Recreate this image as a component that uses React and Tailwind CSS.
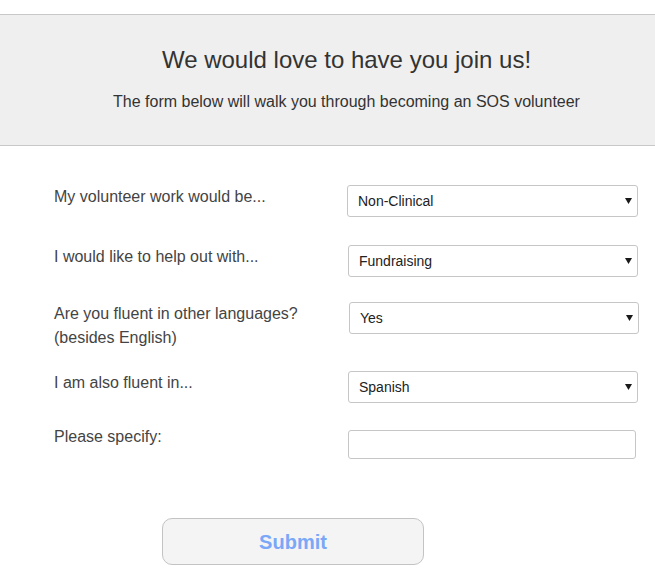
import { useState } from 'react'

function Arrow() {
  return (
    <svg
      className="pointer-events-none absolute right-[6px] top-1/2 -translate-y-1/2"
      width="7"
      height="6"
      viewBox="0 0 7 6"
    >
      <path d="M0 0 H7 L3.5 6 Z" fill="#1a1a1a" />
    </svg>
  )
}

function Select({ value, options, onChange, className }) {
  return (
    <div className={`relative w-[290px] ${className || ''}`}>
      <select
        value={value}
        onChange={(e) => onChange(e.target.value)}
        className="block h-[32px] w-full appearance-none rounded-[3px] border border-[#c6c6c6] bg-white pl-[10px] pr-6 text-[14px] text-[#222] outline-none"
      >
        {options.map((o) => (
          <option key={o}>{o}</option>
        ))}
      </select>
      <Arrow />
    </div>
  )
}

export default function App() {
  const [work, setWork] = useState('Non-Clinical')
  const [help, setHelp] = useState('Fundraising')
  const [fluent, setFluent] = useState('Yes')
  const [lang, setLang] = useState('Spanish')
  const [other, setOther] = useState('')

  return (
    <div className="min-h-screen bg-white pt-[14px] font-['Liberation_Sans',Arial,sans-serif] text-[#333]">
      <div className="border-y border-[#c8c8c8] bg-[#efefef] pl-[38px] pt-[32px] pb-[33px] text-center">
        <h1 className="text-[24px] leading-[26px] text-[#333]">We would love to have you join us!</h1>
        <p className="mt-[19px] text-[16px] leading-[20px] text-[#333]">
          The form below will walk you through becoming an SOS volunteer
        </p>
      </div>

      <form className="pl-[54px] pt-[39px]" onSubmit={(e) => e.preventDefault()}>
        <div className="flex items-start">
          <label className="w-[293px] text-[16px] leading-[24px] text-[#444]">My volunteer work would be...</label>
          <Select value={work} onChange={setWork} options={['Non-Clinical', 'Clinical']} className="w-[291px]" />
        </div>

        <div className="mt-[28px] flex items-start">
          <label className="w-[294px] text-[16px] leading-[24px] text-[#444]">I would like to help out with...</label>
          <Select value={help} onChange={setHelp} options={['Fundraising', 'Events', 'Outreach']} />
        </div>

        <div className="mt-[25px] flex items-start">
          <label className="w-[295px] text-[16px] leading-[24px] text-[#444]">
            Are you fluent in other languages?
            <br />
            (besides English)
          </label>
          <Select value={fluent} onChange={setFluent} options={['Yes', 'No']} />
        </div>

        <div className="mt-[21px] flex items-start">
          <label className="w-[294px] text-[16px] leading-[24px] text-[#444]">I am also fluent in...</label>
          <Select value={lang} onChange={setLang} options={['Spanish', 'French', 'Mandarin', 'Other']} />
        </div>

        <div className="mt-[22px] flex items-start">
          <label className="w-[294px] text-[16px] leading-[24px] text-[#444]">Please specify:</label>
          <input
            value={other}
            onChange={(e) => setOther(e.target.value)}
            className="mt-[5px] h-[29px] w-[288px] rounded-[3px] border border-[#c6c6c6] bg-white px-2 text-[14px] outline-none"
          />
        </div>

        <div className="mt-[59px] pl-[108px]">
          <button
            type="submit"
            className="h-[47px] w-[262px] rounded-[10px] border border-[#c3c3c3] bg-[#f4f4f4] text-[20px] font-bold text-[#7aa7f7]"
          >
            Submit
          </button>
        </div>
      </form>
    </div>
  )
}
